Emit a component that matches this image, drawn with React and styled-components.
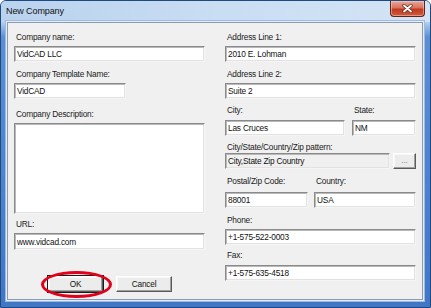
import React from 'react'
import styled, { createGlobalStyle } from 'styled-components'

const GlobalStyle = createGlobalStyle`
  html, body {
    margin: 0;
    padding: 0;
  }
  body {
    width: 431px;
    height: 308px;
    overflow: hidden;
    font-family: 'Liberation Sans', Arial, sans-serif;
  }
`

function App() {
  return (
    <>
      <GlobalStyle />
      <Window>
        <TitleBar>
          <Title>New Company</Title>
          <CloseButton aria-label='Close'>
            <svg width='11' height='9' viewBox='0 0 11 9'>
              <path d='M2 1.5 L9 7.5 M9 1.5 L2 7.5' stroke='#6a2c22' strokeWidth='3.4' strokeLinecap='round' />
              <path d='M2 1.5 L9 7.5 M9 1.5 L2 7.5' stroke='#ffffff' strokeWidth='1.8' strokeLinecap='round' />
            </svg>
          </CloseButton>
        </TitleBar>
        <Frame>
          <Client>
            <Column>
              <Label>Company name:</Label>
              <TextBox defaultValue='VidCAD LLC' />
              <Label $mt={7}>Company Template Name:</Label>
              <TextBox defaultValue='VidCAD' $w={112} />
              <Label $mt={10}>Company Description:</Label>
              <TextArea />
              <Label $mt={5}>URL:</Label>
              <TextBox defaultValue='www.vidcad.com' $h={17} />
              <ButtonRow>
                <Marked>
                  <PushButton $default>OK</PushButton>
                </Marked>
                <PushButton>Cancel</PushButton>
              </ButtonRow>
            </Column>
            <Column>
              <Label>Address Line 1:</Label>
              <TextBox defaultValue='2010 E. Lohman' />
              <Label $mt={7}>Address Line 2:</Label>
              <TextBox defaultValue='Suite 2' />
              <FieldRow $cols='120px 64px' $gap={7} $mt={6}>
                <Field>
                  <Label>City:</Label>
                  <TextBox defaultValue='Las Cruces' $mt={5} />
                </Field>
                <Field>
                  <Label>State:</Label>
                  <TextBox defaultValue='NM' $mt={5} />
                </Field>
              </FieldRow>
              <Label $mt={6}>City/State/Country/Zip pattern:</Label>
              <PatternRow>
                <TextBox defaultValue='City,State Zip Country' $w={165} $disabled readOnly />
                <SmallButton>...</SmallButton>
              </PatternRow>
              <FieldRow $cols='83px 102px' $gap={6} $mt={7}>
                <Field>
                  <Label>Postal/Zip Code:</Label>
                  <TextBox defaultValue='88001' $mt={6} />
                </Field>
                <Field>
                  <Label>Country:</Label>
                  <TextBox defaultValue='USA' $mt={6} />
                </Field>
              </FieldRow>
              <Label $mt={7}>Phone:</Label>
              <TextBox defaultValue='+1-575-522-0003' />
              <Label $mt={5}>Fax:</Label>
              <TextBox defaultValue='+1-575-635-4518' $mt={5} />
            </Column>
          </Client>
        </Frame>
      </Window>
    </>
  )
}

export default App

///// Style //////

const Window = styled.div`
  width: 431px;
  height: 308px;
  box-sizing: border-box;
  display: flex;
  flex-direction: column;
  border: 1px solid #1f4a80;
  border-radius: 6px 6px 0 0;
  background: linear-gradient(to bottom, #c3d9f1 0px, #b7cfeb 21px, #5a8fd6 36px, #3f76c6 100%);
  overflow: hidden;
`

const TitleBar = styled.div`
  height: 21px;
  flex-shrink: 0;
  display: flex;
  justify-content: space-between;
  align-items: flex-start;
  padding-left: 5px;
  padding-right: 5px;
  background: linear-gradient(to right, #b9d2ee 0%, #c9ddf3 50%, #d4e4f6 100%);
`

const Title = styled.span`
  font-family: 'Liberation Sans', Arial, sans-serif;
  font-size: 9px;
  line-height: 20px;
  color: #111;
  letter-spacing: -0.1px;
`

const CloseButton = styled.button`
  width: 35px;
  height: 16px;
  padding: 0;
  margin: 0;
  display: flex;
  align-items: center;
  justify-content: center;
  border: 1px solid #5e2319;
  border-top: none;
  border-radius: 0 0 4px 4px;
  background: linear-gradient(to bottom, #e9a99b 0%, #d9725e 45%, #c2391f 55%, #cf5a3c 100%);
  box-shadow: inset 0 0 0 1px rgba(255, 210, 200, 0.5);
`

const Frame = styled.div`
  flex: 1;
  display: flex;
  padding: 0 7px 7px 6px;
`

const Client = styled.div`
  flex: 1;
  box-sizing: border-box;
  display: grid;
  grid-template-columns: 191px 191px;
  column-gap: 20px;
  align-items: start;
  padding: 9px 6px 0 6px;
  background: #f0f0f0;
  border: 1px solid #8c9cb0;
  box-shadow: 0 0 0 1px #e3ecf7, 0 0 0 2px #9dbbe4;
`

const Column = styled.div`
  display: flex;
  flex-direction: column;
`

const Field = styled.div`
  display: flex;
  flex-direction: column;
`

const FieldRow = styled.div`
  display: grid;
  grid-template-columns: ${(p) => p.$cols};
  column-gap: ${(p) => p.$gap}px;
  margin-top: ${(p) => p.$mt || 0}px;
`

const Label = styled.label`
  display: block;
  height: 10px;
  line-height: 10px;
  margin-top: ${(p) => p.$mt || 0}px;
  padding-left: 2px;
  font-size: 8.3px;
  letter-spacing: -0.2px;
  color: #1a1a1a;
  white-space: nowrap;
`

const TextBox = styled.input.attrs({ type: 'text' })`
  box-sizing: border-box;
  width: ${(p) => (p.$w ? `${p.$w}px` : '100%')};
  height: ${(p) => p.$h || 16}px;
  margin: ${(p) => (p.$mt === undefined ? 4 : p.$mt)}px 0 0 0;
  padding: 0 2px;
  font-family: 'Liberation Sans', Arial, sans-serif;
  font-size: 8.3px;
  letter-spacing: -0.2px;
  color: #111;
  background: ${(p) => (p.$disabled ? '#f0f0f0' : '#fff')};
  border-style: solid;
  border-width: 1px;
  border-color: #8a8a8a #f5f5f5 #f5f5f5 #8a8a8a;
  box-shadow: inset 1px 1px 0 #b9b9b9, inset -1px -1px 0 #e2e2e2;
  outline: none;
`

const TextArea = styled.textarea`
  box-sizing: border-box;
  width: 100%;
  height: 91px;
  margin: 4px 0 0 0;
  padding: 2px;
  resize: none;
  font-family: 'Liberation Sans', Arial, sans-serif;
  font-size: 8.3px;
  background: #fff;
  border-style: solid;
  border-width: 1px;
  border-color: #8a8a8a #f5f5f5 #f5f5f5 #8a8a8a;
  box-shadow: inset 1px 1px 0 #b9b9b9, inset -1px -1px 0 #e2e2e2;
  outline: none;
`

const PatternRow = styled.div`
  display: flex;
  gap: 3px;
  margin-top: 1px;
  & > input {
    margin-top: 0;
  }
`

const ButtonBase = styled.button`
  box-sizing: border-box;
  padding: 0;
  font-family: 'Liberation Sans', Arial, sans-serif;
  color: #111;
  background: #ececec;
  border-style: solid;
  border-width: 1px;
  border-color: #ffffff #5a5a5a #5a5a5a #ffffff;
  box-shadow: inset -1px -1px 0 #a0a0a0, inset 1px 1px 0 #f8f8f8;
`

const SmallButton = styled(ButtonBase)`
  width: 23px;
  height: 16px;
  font-size: 7px;
  line-height: 10px;
  color: #555;
`

const ButtonRow = styled.div`
  display: flex;
  gap: 13px;
  margin-top: 26px;
  padding-left: 34px;
`

const PushButton = styled(ButtonBase)`
  width: ${(p) => (p.$default ? 55 : 56)}px;
  height: 16px;
  font-size: 8.3px;
  letter-spacing: -0.2px;
  outline: ${(p) => (p.$default ? '1px solid #1a1a1a' : 'none')};
`

const Marked = styled.span`
  position: relative;
  display: inline-flex;

  &::after {
    content: '';
    position: absolute;
    left: -7px;
    top: -5px;
    width: 71px;
    height: 27px;
    box-sizing: border-box;
    border: 3px solid #e3001b;
    border-radius: 50%;
    pointer-events: none;
  }
`
